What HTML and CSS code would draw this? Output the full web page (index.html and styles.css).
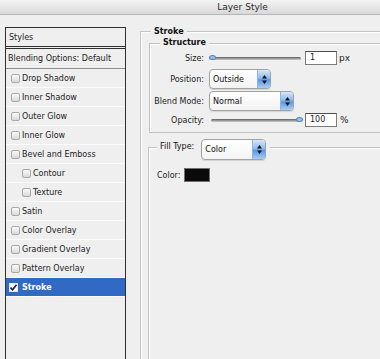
FILE: index.html
```html
<!DOCTYPE html>
<html lang="en">

<head>
    <meta charset="UTF-8">
    <meta name="viewport" content="width=device-width, initial-scale=1.0">
    <title>Layer Style</title>
    <link rel="stylesheet" href="styles.css">
</head>

<body>
    <div class="titlebar"><span>Layer Style</span></div>

    <div class="dialog">
        <ul class="styles">
            <li class="head">Styles</li>
            <li class="blend">Blending Options: Default</li>
            <li><span class="check"></span>Drop Shadow</li>
            <li><span class="check"></span>Inner Shadow</li>
            <li><span class="check"></span>Outer Glow</li>
            <li><span class="check"></span>Inner Glow</li>
            <li><span class="check"></span>Bevel and Emboss</li>
            <li class="sub"><span class="check"></span>Contour</li>
            <li class="sub"><span class="check"></span>Texture</li>
            <li><span class="check"></span>Satin</li>
            <li><span class="check"></span>Color Overlay</li>
            <li><span class="check"></span>Gradient Overlay</li>
            <li><span class="check"></span>Pattern Overlay</li>
            <li class="active">
                <span class="check on">
                    <svg width="7" height="7" viewBox="0 0 7 7"><path d="M0.5 3.5 L2.5 5.8 L6.5 0.8" fill="none" stroke="#10204a" stroke-width="1.6"/></svg>
                </span>Stroke
            </li>
        </ul>

        <div class="settings">
            <fieldset class="group stroke">
                <legend>Stroke</legend>

                <fieldset class="group structure">
                    <legend>Structure</legend>

                    <div class="row size">
                        <label>Size:</label>
                        <div class="slider"><span class="thumb"></span></div>
                        <span class="field">1</span>
                        <span class="unit">px</span>
                    </div>

                    <div class="row select-row">
                        <label>Position:</label>
                        <div class="select position">
                            <span class="value">Outside</span>
                            <span class="spin"><svg width="7" height="11" viewBox="0 0 7 11"><path d="M1 4.5 L3.5 1 L6 4.5 Z M1 6.5 L6 6.5 L3.5 10 Z" fill="#111"/></svg></span>
                        </div>
                    </div>

                    <div class="row select-row blend-row">
                        <label>Blend Mode:</label>
                        <div class="select blend-mode">
                            <span class="value">Normal</span>
                            <span class="spin"><svg width="7" height="11" viewBox="0 0 7 11"><path d="M1 4.5 L3.5 1 L6 4.5 Z M1 6.5 L6 6.5 L3.5 10 Z" fill="#111"/></svg></span>
                        </div>
                    </div>

                    <div class="row opacity">
                        <label>Opacity:</label>
                        <div class="slider"><span class="thumb"></span></div>
                        <span class="field">100</span>
                        <span class="unit">%</span>
                    </div>
                </fieldset>

                <fieldset class="group fill">
                    <legend>
                        <span class="fill-label">Fill Type:</span>
                        <span class="select fill-type">
                            <span class="value">Color</span>
                            <span class="spin"><svg width="7" height="11" viewBox="0 0 7 11"><path d="M1 4.5 L3.5 1 L6 4.5 Z M1 6.5 L6 6.5 L3.5 10 Z" fill="#111"/></svg></span>
                        </span>
                    </legend>

                    <div class="color-row">
                        <span>Color:</span>
                        <span class="swatch"></span>
                    </div>
                </fieldset>
            </fieldset>
        </div>
    </div>
</body>

</html>
```

FILE: styles.css
```css
/* Layer Style dialog, Stroke page */
body {
    margin: 0;
    height: 359px;
    overflow: hidden;
    background-color: #efefef;
    font-family: "DejaVu Sans", Tahoma, sans-serif;
    font-size: 8px;
    color: #1c1c1c;
}

.titlebar {
    height: 14px;
    padding-left: 105px;
    display: flex;
    align-items: center;
    justify-content: center;
    border-bottom: 1px solid #b6b6b6;
    background: linear-gradient(#f4f4f4, #d8d8d8);
    font-size: 9px;
    color: #2a2a2a;
}

.dialog {
    display: flex;
    align-items: flex-start;
    height: 333px;
    padding: 11px 0 0 5px;
    overflow: hidden;
}

/* left list of effects */
.styles {
    flex-shrink: 0;
    list-style: none;
    margin: 1px 0 0;
    padding: 0;
    width: 119px;
    height: 340px;
    border: 1px solid #303030;
}

.styles li {
    height: 18px;
    display: flex;
    align-items: center;
    padding-left: 5px;
    border-bottom: 1px solid #fbfbfb;
}

.styles .head {
    padding-left: 3px;
    border-bottom: 3px double #303030;
}

.styles .blend {
    height: 19px;
    padding-left: 2px;
    border-bottom-color: #8e8e8e;
}

.styles .sub {
    padding-left: 16px;
}

.styles .active {
    background-color: #316ac5;
    color: #fff;
    font-weight: bold;
}

.check {
    width: 9px;
    height: 9px;
    box-sizing: border-box;
    margin-right: 2px;
    border: 1px solid #a9a9a9;
    border-radius: 2px;
    background: linear-gradient(#fafafa, #d9d9d9);
}

.check.on {
    display: flex;
    align-items: center;
    justify-content: center;
    margin-left: -2px;
    margin-right: 4px;
    border-color: #dfe8f7;
    border-radius: 0;
    background: #fff;
}

/* right side groups */
.settings {
    flex: 1;
    min-width: 0;
    height: 340px;
    margin-left: 14px;
    overflow: hidden;
}

.group {
    margin: 0;
    border: 1px solid #c3c3c3;
    box-shadow: inset 1px 1px 0 #fdfdfd;
}

.group legend {
    padding: 0 3px;
    background-color: #efefef;
    font-weight: bold;
    color: #111;
}

.stroke {
    width: 300px;
    min-height: 400px;
    padding: 0 0 0 10px;
}

.stroke > legend {
    line-height: 11px;
}

.structure {
    margin-left: -2px;
    padding: 2px 0 5px 10px;
}

.structure > legend {
    line-height: 12px;
}

.row {
    display: flex;
    align-items: center;
    height: 14px;
}

.row label {
    display: flex;
    justify-content: flex-end;
    flex-shrink: 0;
    width: 44px;
    margin-right: 5px;
    white-space: nowrap;
}

.select-row {
    height: 20px;
    margin-top: 4px;
}

.blend-row,
.opacity {
    margin-top: 2px;
}

.slider {
    position: relative;
    width: 92px;
    height: 3px;
    border-radius: 2px;
    background: linear-gradient(#5e5e5e, #cfcfcf);
}

.thumb {
    position: absolute;
    top: -2px;
    left: 0;
    width: 7px;
    height: 5px;
    box-sizing: border-box;
    border: 1px solid #5684c4;
    border-radius: 50%;
    background-color: #9cc0ec;
}

.opacity .slider {
    width: 91px;
    margin-left: 2px;
}

.opacity .thumb {
    left: auto;
    right: -1px;
}

.field {
    width: 32px;
    height: 14px;
    box-sizing: border-box;
    margin-left: 4px;
    padding-left: 4px;
    border: 1px solid #7c7c7c;
    border-top-color: #4c4c4c;
    background-color: #fff;
    line-height: 12px;
}

.opacity .field {
    margin-left: 3px;
}

.unit {
    margin-left: 2px;
    font-size: 9px;
}

.opacity .unit {
    margin-left: 3px;
}

/* popup selects with the blue spin button */
.select {
    display: flex;
    align-items: stretch;
    height: 20px;
    box-sizing: border-box;
    border: 1px solid #a3a3a3;
    border-radius: 4px;
    background: linear-gradient(#ffffff, #f3f3f3);
    box-shadow: 0 1px 1px rgba(0, 0, 0, 0.12);
    font-weight: normal;
    color: #111;
}

.select .value {
    flex: 1;
    display: flex;
    align-items: center;
    padding-left: 3px;
}

.spin {
    width: 12px;
    display: flex;
    align-items: center;
    justify-content: center;
    border-left: 1px solid #8fb3e0;
    border-radius: 0 3px 3px 0;
    background: linear-gradient(#d6e7fb, #8dbaf0 45%, #5a98e4 55%, #a8cdf5);
}

.position {
    width: 62px;
}

.blend-mode {
    width: 85px;
}

.fill {
    margin: 7px 0 0 -3px;
    min-height: 250px;
    padding: 14px 0 0 8px;
}

.fill > legend {
    display: flex;
    align-items: flex-start;
    padding: 0 4px 0 3px;
    font-weight: normal;
}

.fill-label {
    line-height: 14px;
}

.fill-type {
    width: 65px;
    height: 21px;
    margin: -1px 0 -7px 7px;
}

.color-row {
    display: flex;
    align-items: center;
    height: 14px;
}

.swatch {
    width: 26px;
    height: 14px;
    box-sizing: border-box;
    margin-left: 4px;
    border: 1px solid #6e6e6e;
    background-color: #0a0a0a;
}
```
